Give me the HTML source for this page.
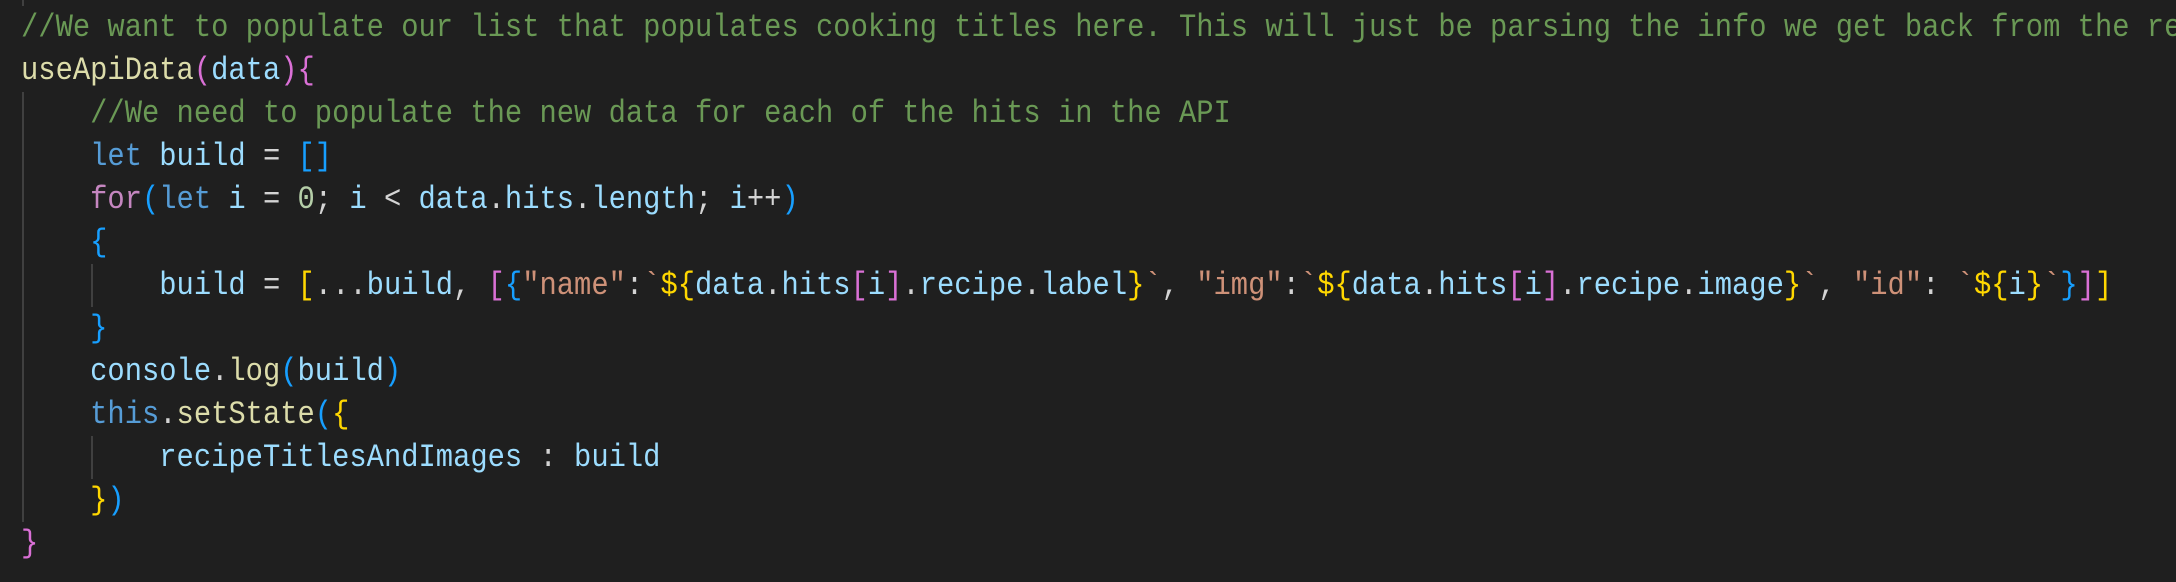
<!DOCTYPE html>
<html><head><meta charset="utf-8"><style>
html,body{margin:0;padding:0;background:#1f1f1f;width:2176px;height:582px;overflow:hidden}
pre{margin:0;position:absolute;left:21px;top:6px;font-family:"Liberation Mono",monospace;font-size:32px;line-height:43px;color:#d4d4d4;white-space:pre;transform:scaleX(0.9);transform-origin:0 0}
.c{color:#6a9955}.f{color:#dcdcaa}.v{color:#9cdcfe}.k{color:#569cd6}.p{color:#c586c0}
.g{color:#ffd700}.m{color:#da70d6}.b{color:#179fff}.s{color:#ce9178}.n{color:#b5cea8}
.guide{position:absolute;width:2px;background:#404040}
</style></head><body>
<div class="guide" style="left:22px;top:0;height:6px"></div>
<div class="guide" style="left:22px;top:92px;height:430px"></div>
<div class="guide" style="left:91px;top:264px;height:43px"></div>
<div class="guide" style="left:91px;top:436px;height:43px"></div>
<pre><span class="c">//We want to populate our list that populates cooking titles here. This will just be parsing the info we get back from the request</span>
<span class="f">useApiData</span><span class="m">(</span><span class="v">data</span><span class="m">){</span>
    <span class="c">//We need to populate the new data for each of the hits in the API</span>
    <span class="k">let</span> <span class="v">build</span> = <span class="b">[]</span>
    <span class="p">for</span><span class="b">(</span><span class="k">let</span> <span class="v">i</span> = <span class="n">0</span>; <span class="v">i</span> &lt; <span class="v">data</span>.<span class="v">hits</span>.<span class="v">length</span>; <span class="v">i</span>++<span class="b">)</span>
    <span class="b">{</span>
        <span class="v">build</span> = <span class="g">[</span>...<span class="v">build</span>, <span class="m">[</span><span class="b">{</span><span class="s">"name"</span>:<span class="s">`</span><span class="g">${</span><span class="v">data</span>.<span class="v">hits</span><span class="m">[</span><span class="v">i</span><span class="m">]</span>.<span class="v">recipe</span>.<span class="v">label</span><span class="g">}</span><span class="s">`</span>, <span class="s">"img"</span>:<span class="s">`</span><span class="g">${</span><span class="v">data</span>.<span class="v">hits</span><span class="m">[</span><span class="v">i</span><span class="m">]</span>.<span class="v">recipe</span>.<span class="v">image</span><span class="g">}</span><span class="s">`</span>, <span class="s">"id"</span>: <span class="s">`</span><span class="g">${</span><span class="v">i</span><span class="g">}</span><span class="s">`</span><span class="b">}</span><span class="m">]</span><span class="g">]</span>
    <span class="b">}</span>
    <span class="v">console</span>.<span class="f">log</span><span class="b">(</span><span class="v">build</span><span class="b">)</span>
    <span class="k">this</span>.<span class="f">setState</span><span class="b">(</span><span class="g">{</span>
        <span class="v">recipeTitlesAndImages</span> : <span class="v">build</span>
    <span class="g">}</span><span class="b">)</span>
<span class="m">}</span></pre>
</body></html>
